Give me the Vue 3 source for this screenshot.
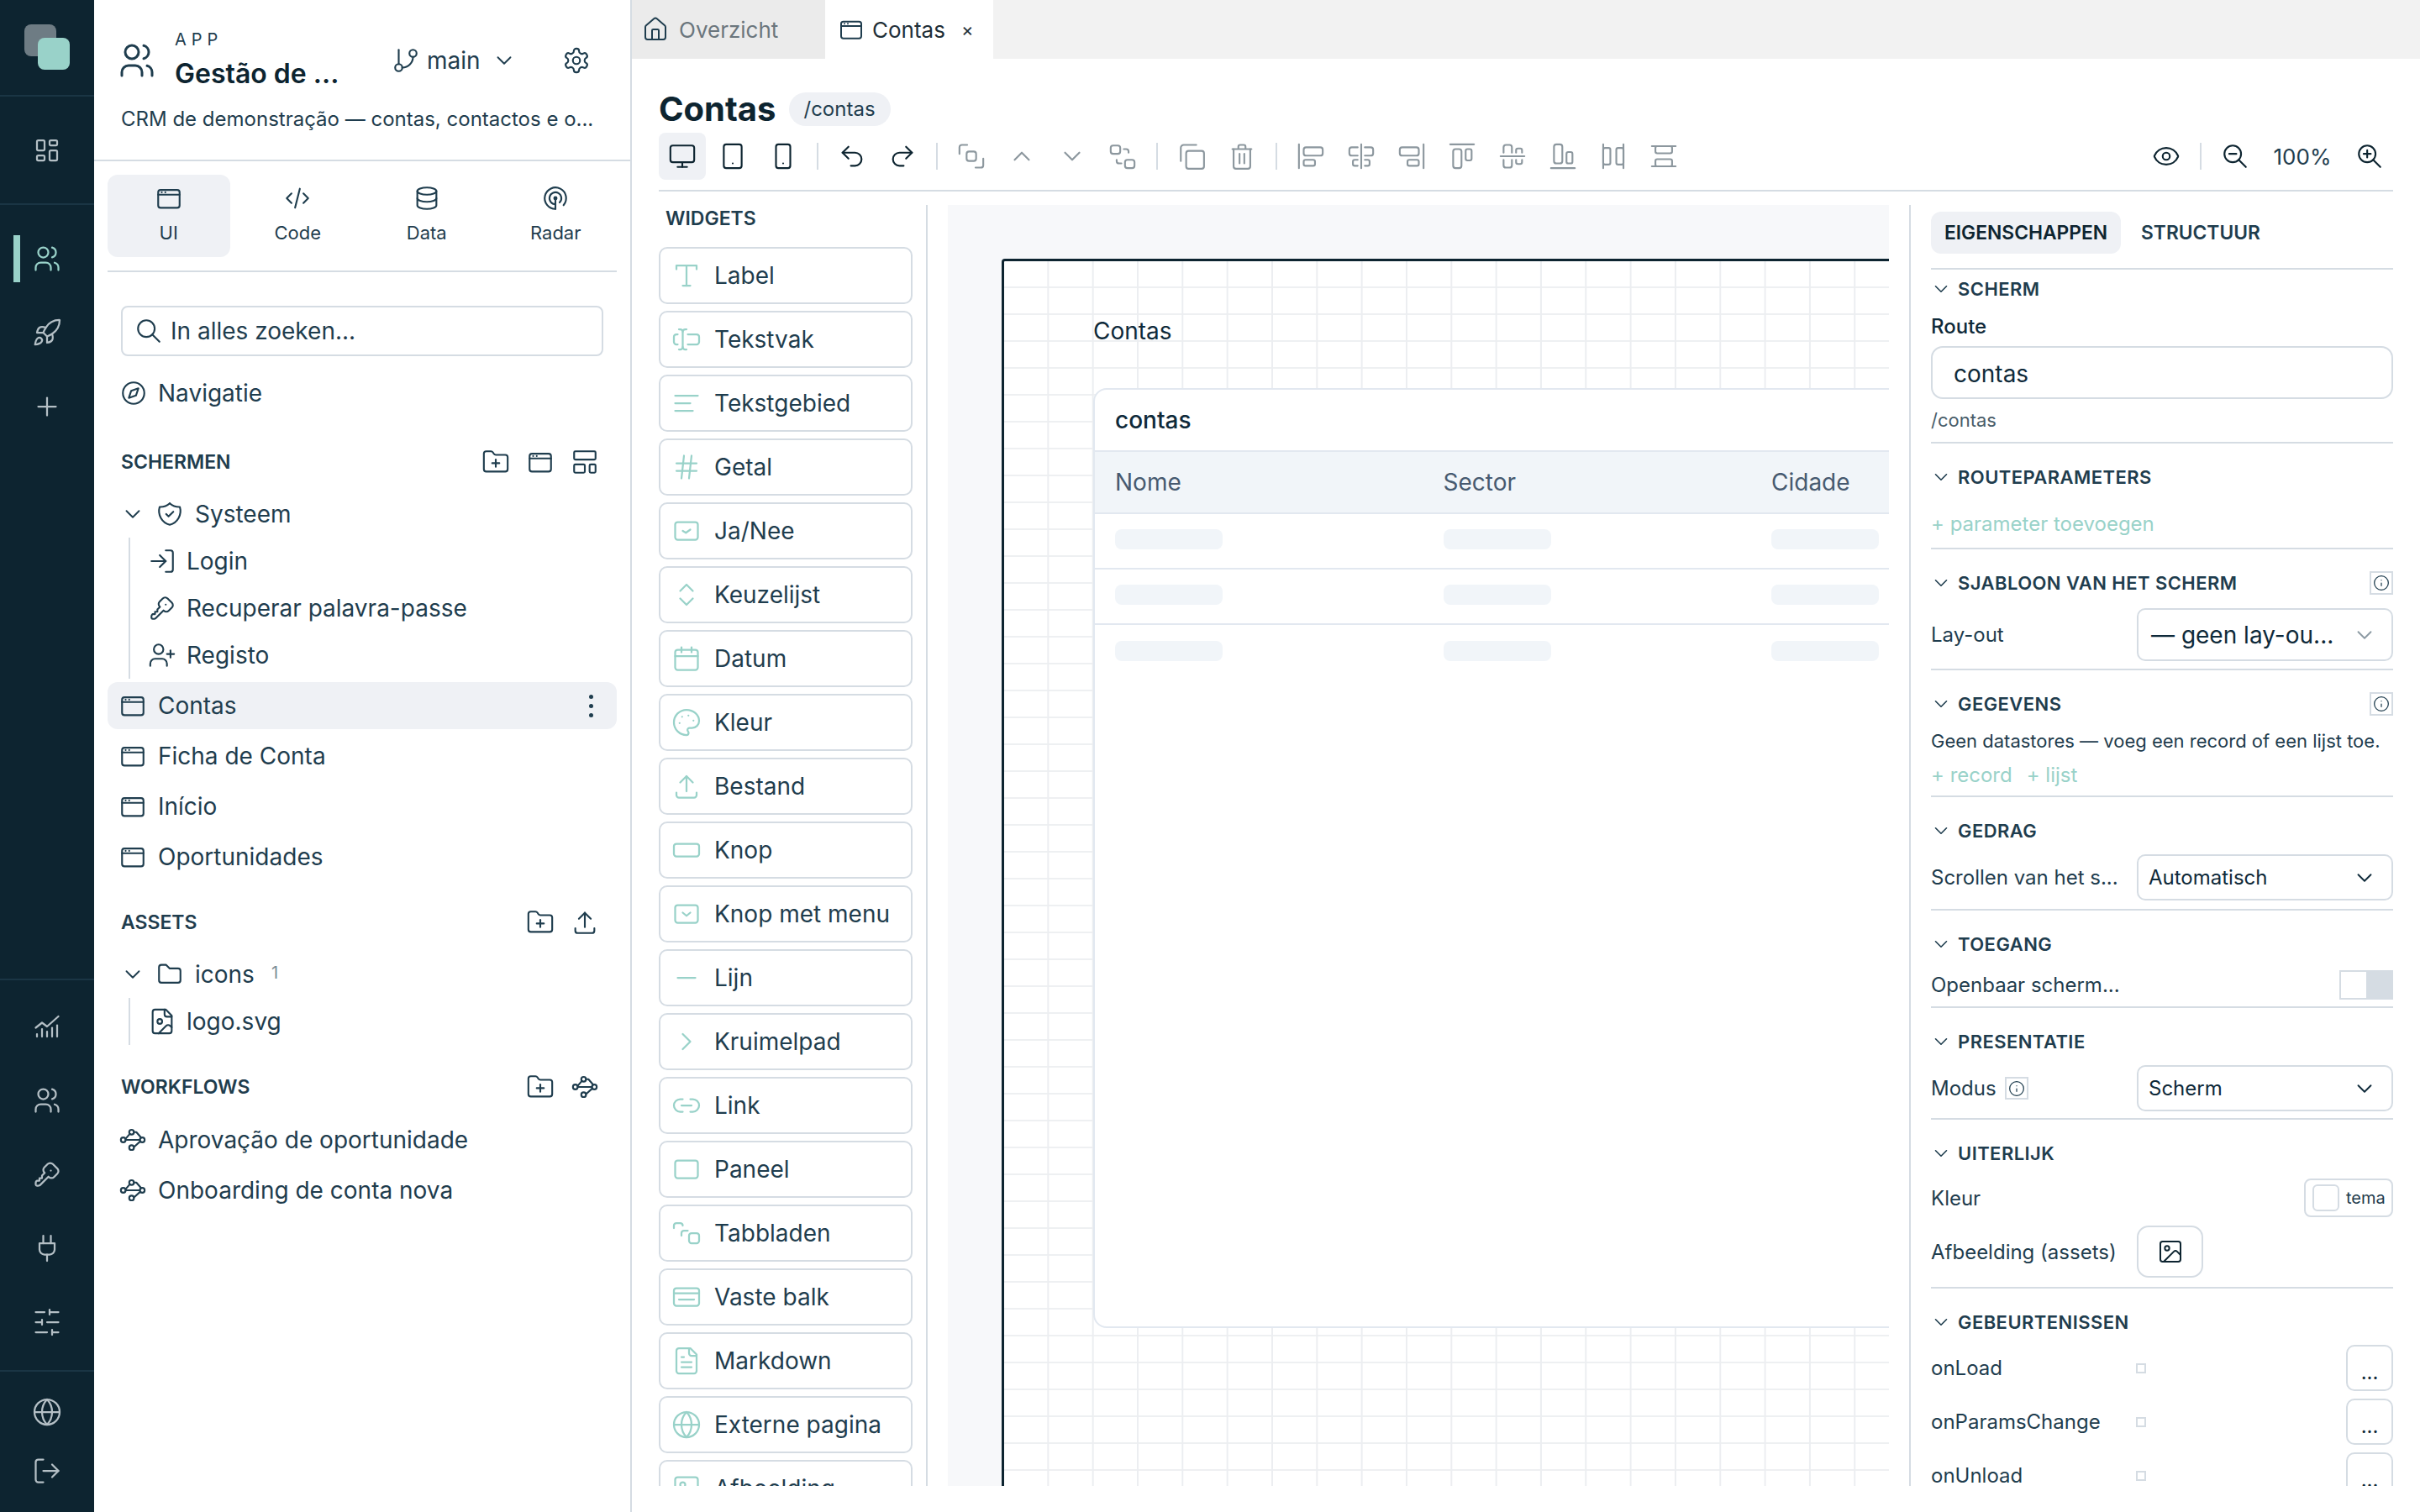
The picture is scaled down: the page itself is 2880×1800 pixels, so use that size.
<script setup>
const p = (...ds) => ds.map((d) => `<path d="${d}"/>`).join('')
const r = (x, y, w, h, rx = 2) => `<rect x="${x}" y="${y}" width="${w}" height="${h}" rx="${rx}"/>`
const c = (x, y, rad) => `<circle cx="${x}" cy="${y}" r="${rad}"/>`
const I = {
  dash: p('M5 4h4a1 1 0 0 1 1 1v6a1 1 0 0 1-1 1h-4a1 1 0 0 1-1-1v-6a1 1 0 0 1 1-1', 'M5 16h4a1 1 0 0 1 1 1v2a1 1 0 0 1-1 1h-4a1 1 0 0 1-1-1v-2a1 1 0 0 1 1-1', 'M15 12h4a1 1 0 0 1 1 1v6a1 1 0 0 1-1 1h-4a1 1 0 0 1-1-1v-6a1 1 0 0 1 1-1', 'M15 4h4a1 1 0 0 1 1 1v2a1 1 0 0 1-1 1h-4a1 1 0 0 1-1-1v-2a1 1 0 0 1 1-1'),
  users: c(9, 7, 4) + p('M3 21v-2a4 4 0 0 1 4-4h4a4 4 0 0 1 4 4v2', 'M16 3.13a4 4 0 0 1 0 7.75', 'M21 21v-2a4 4 0 0 0-3-3.85'),
  rocket: p('M4.5 16.5c-1.5 1.26-2 5-2 5s3.74-.5 5-2c.71-.84.7-2.13-.09-2.91a2.18 2.18 0 0 0-2.91-.09z', 'm12 15-3-3a22 22 0 0 1 2-3.95A12.88 12.88 0 0 1 22 2c0 2.72-.78 7.5-6 11a22.35 22.35 0 0 1-4 2z', 'M9 12H4s.55-3.03 2-4c1.62-1.08 5 0 5 0', 'M12 15v5s3.03-.55 4-2c1.08-1.62 0-5 0-5'),
  plus: p('M5 12h14', 'M12 5v14'),
  chart: p('M3 13l5-4 4 3 9-8', 'M4 20v-2', 'M8 20v-6', 'M12 20v-4', 'M16 20v-7', 'M20 20v-9'),
  key: p('M16.555 3.843l3.602 3.602a2.877 2.877 0 0 1 0 4.069l-2.643 2.643a2.877 2.877 0 0 1-4.069 0l-.301-.301l-6.558 6.558a2 2 0 0 1-1.239.578l-.175.008h-1.172a1 1 0 0 1-.993-.883l-.007-.117v-1.172a2 2 0 0 1 .467-1.284l.119-.13l.414-.414h2v-2h2v-2l2.144-2.144l-.301-.301a2.877 2.877 0 0 1 0-4.069l2.643-2.643a2.877 2.877 0 0 1 4.069 0z', 'M15 9h.01'),
  plug: p('M12 22v-5', 'M9 8V2', 'M15 8V2', 'M18 8v5a4 4 0 0 1-4 4h-4a4 4 0 0 1-4-4V8Z'),
  sliders: p('M21 4h-7', 'M10 4H3', 'M21 12h-9', 'M8 12H3', 'M21 20h-5', 'M12 20H3', 'M14 2v4', 'M8 10v4', 'M16 18v4'),
  globe: c(12, 12, 10) + p('M12 2a14.5 14.5 0 0 0 0 20 14.5 14.5 0 0 0 0-20', 'M2 12h20'),
  logout: p('M9 21H5a2 2 0 0 1-2-2V5a2 2 0 0 1 2-2h4', 'm16 17 5-5-5-5', 'M21 12H9'),
  login: p('M15 3h4a2 2 0 0 1 2 2v14a2 2 0 0 1-2 2h-4', 'm10 17 5-5-5-5', 'M15 12H3'),
  branch: p('M6 3v12') + c(18, 6, 3) + c(6, 18, 3) + p('M18 9a9 9 0 0 1-9 9'),
  gear: p('M12.22 2h-.44a2 2 0 0 0-2 2v.18a2 2 0 0 1-1 1.73l-.43.25a2 2 0 0 1-2 0l-.15-.08a2 2 0 0 0-2.73.73l-.22.38a2 2 0 0 0 .73 2.73l.15.1a2 2 0 0 1 1 1.72v.51a2 2 0 0 1-1 1.74l-.15.09a2 2 0 0 0-.73 2.73l.22.38a2 2 0 0 0 2.73.73l.15-.08a2 2 0 0 1 2 0l.43.25a2 2 0 0 1 1 1.73V20a2 2 0 0 0 2 2h.44a2 2 0 0 0 2-2v-.18a2 2 0 0 1 1-1.73l.43-.25a2 2 0 0 1 2 0l.15.08a2 2 0 0 0 2.73-.73l.22-.39a2 2 0 0 0-.73-2.73l-.15-.08a2 2 0 0 1-1-1.74v-.5a2 2 0 0 1 1-1.74l.15-.09a2 2 0 0 0 .73-2.73l-.22-.38a2 2 0 0 0-2.73-.73l-.15.08a2 2 0 0 1-2 0l-.43-.25a2 2 0 0 1-1-1.73V4a2 2 0 0 0-2-2z') + c(12, 12, 3),
  win: r(3, 5, 18, 15) + p('M3 9h18', 'M6 7h.01', 'M9 7h.01'),
  code: p('M7 8l-4 4l4 4', 'M17 8l4 4l-4 4', 'M14 4l-4 16'),
  db: p('M12 6m-8 0a8 3 0 1 0 16 0a8 3 0 1 0-16 0', 'M4 6v6a8 3 0 0 0 16 0v-6', 'M4 12v6a8 3 0 0 0 16 0v-6'),
  radar: p('M12 12m-1 0a1 1 0 1 0 2 0a1 1 0 1 0-2 0', 'M15.51 15.56a5 5 0 1 0-3.51 1.44', 'M18.832 17.86a9 9 0 1 0-6.832 3.14', 'M12 12v9'),
  search: p('M10 10m-7 0a7 7 0 1 0 14 0a7 7 0 1 0-14 0', 'M21 21l-6-6'),
  compass: p('M8 16l2-6l6-2l-2 6l-6 2') + c(12, 12, 9),
  folderPlus: p('M12 10v6', 'M9 13h6', 'M20 20a2 2 0 0 0 2-2V8a2 2 0 0 0-2-2h-7.9a2 2 0 0 1-1.69-.9L9.6 3.9A2 2 0 0 0 7.93 3H4a2 2 0 0 0-2 2v13a2 2 0 0 0 2 2Z'),
  folder: p('M5 4h4l3 3h7a2 2 0 0 1 2 2v8a2 2 0 0 1-2 2h-14a2 2 0 0 1-2-2v-11a2 2 0 0 1 2-2'),
  layout: r(3, 3, 18, 7, 1) + r(3, 14, 9, 7, 1) + r(16, 14, 5, 7, 1),
  chev: p('m6 9 6 6 6-6'),
  shield: p('M9 12l2 2l4-4', 'M12 3a12 12 0 0 0 8.5 3a12 12 0 0 1-8.5 15a12 12 0 0 1-8.5-15a12 12 0 0 0 8.5-3'),
  userPlus: p('M16 21v-2a4 4 0 0 0-4-4H6a4 4 0 0 0-4 4v2', 'M19 8v6', 'M22 11h-6') + c(9, 7, 4),
  upload: p('M4 17v2a2 2 0 0 0 2 2h12a2 2 0 0 0 2-2v-2', 'M7 9l5-5l5 5', 'M12 4v12'),
  fileImg: p('M15 2H6a2 2 0 0 0-2 2v16a2 2 0 0 0 2 2h12a2 2 0 0 0 2-2V7Z', 'M14 2v4a2 2 0 0 0 2 2h4', 'm20 17-1.296-1.296a2.41 2.41 0 0 0-3.408 0L9 22') + c(10, 12, 2),
  flow: c(11, 5.5, 2) + c(4, 12, 2) + c(20, 12, 2) + c(11, 18.5, 2) + p('M6 11l3.5-4', 'M13 5.5h2l4 4.6', 'M6 12h12', 'M13 18l5-4.5'),
  home: p('M15 21v-8a1 1 0 0 0-1-1h-4a1 1 0 0 0-1 1v8', 'M3 10a2 2 0 0 1 .709-1.528l7-5.999a2 2 0 0 1 2.582 0l7 5.999A2 2 0 0 1 21 10v9a2 2 0 0 1-2 2H5a2 2 0 0 1-2-2z'),
  monitor: r(2, 3, 20, 14) + p('M8 21h8', 'M12 17v4'),
  tablet: r(4.5, 2, 15, 20) + p('M12 18h.01'),
  phone: r(6, 2, 12, 20) + p('M12 18h.01'),
  undo: p('M9 14 4 9l5-5', 'M4 9h10.5a5.5 5.5 0 0 1 5.5 5.5a5.5 5.5 0 0 1-5.5 5.5H11'),
  redo: p('m15 14 5-5-5-5', 'M20 9H9.5A5.5 5.5 0 0 0 4 14.5A5.5 5.5 0 0 0 9.5 20H13'),
  group: p('M2 10V4.5a2 2 0 0 1 2-2h4.5', 'M22 14v5.5a2 2 0 0 1-2 2h-4.5') + r(8, 8, 8, 8),
  ungroup: r(2, 3, 8, 7) + r(14, 15, 8, 7) + p('M13 6h2a2 2 0 0 1 2 2v1', 'M11 18H9a2 2 0 0 1-2-2v-1'),
  up: p('m18 15-6-6-6 6'),
  copy: r(7.5, 7.5, 15, 15) + p('M3 16V5a2.5 2.5 0 0 1 2.5-2.5H16'),
  trash: p('M4 6h16', 'M5 6v14.5a2 2 0 0 0 2 2h10a2 2 0 0 0 2-2V6', 'M9 5.5V4a1.5 1.5 0 0 1 1.5-1.5h3A1.5 1.5 0 0 1 15 4v1.5', 'M10 10v8', 'M14 10v8'),
  aL: p('M2 2v20') + r(6, 4.5, 16, 7) + r(6, 15, 9.5, 5, 1.5),
  aC: p('M12 2v20', 'M9 4.5H4a2 2 0 0 0-2 2v3a2 2 0 0 0 2 2h5', 'M15 4.5h5a2 2 0 0 1 2 2v3a2 2 0 0 1-2 2h-5', 'M9 15H6.5A1.5 1.5 0 0 0 5 16.5v2A1.5 1.5 0 0 0 6.5 20H9', 'M15 15h2.5a1.5 1.5 0 0 1 1.5 1.5v2a1.5 1.5 0 0 1-1.5 1.5H15'),
  aR: p('M22 2v20') + r(2, 4.5, 16, 7) + r(8.5, 15, 9.5, 5, 1.5),
  aT: p('M2 2h20') + r(4.5, 6, 7, 16) + r(15, 6, 5, 9.5, 1.5),
  aM: p('M2 12h20', 'M4.5 9V4.5a2 2 0 0 1 2-2h3a2 2 0 0 1 2 2V9', 'M4.5 15v4.5a2 2 0 0 0 2 2h3a2 2 0 0 0 2-2V15', 'M15 9V7a1.5 1.5 0 0 1 1.5-1.5h2A1.5 1.5 0 0 1 20 7v2', 'M15 15v2a1.5 1.5 0 0 0 1.5 1.5h2a1.5 1.5 0 0 0 1.5-1.5v-2'),
  aB: p('M2 22h20') + r(4.5, 2, 7, 16) + r(15, 8.5, 5, 9.5, 1.5),
  dH: p('M3.5 2v20', 'M20.5 2v20') + r(3.5, 5, 6, 14, 1.5) + r(14.5, 5, 6, 14, 1.5),
  dV: p('M2 3.5h20', 'M2 20.5h20') + r(5, 3.5, 14, 6, 1.5) + r(5, 14.5, 14, 6, 1.5),
  eye: p('M2.062 12.348a1 1 0 0 1 0-.696 10.75 10.75 0 0 1 19.876 0 1 1 0 0 1 0 .696 10.75 10.75 0 0 1-19.876 0') + c(12, 12, 3),
  zoomOut: c(10, 10, 7) + p('M7 10h6', 'M21 21l-6-6'),
  zoomIn: c(10, 10, 7) + p('M7 10h6', 'M10 7v6', 'M21 21l-6-6'),
  info: c(12, 12, 10) + p('M12 16v-4', 'M12 8h.01'),
  type: p('M12 4v16', 'M4 7V4h16v3', 'M9 20h6'),
  textInput: p('M12 20h-1a2 2 0 0 1-2-2 2 2 0 0 1-2 2H6', 'M13 8h7a2 2 0 0 1 2 2v4a2 2 0 0 1-2 2h-7', 'M5 16H4a2 2 0 0 1-2-2v-4a2 2 0 0 1 2-2h1', 'M6 4h1a2 2 0 0 1 2 2 2 2 0 0 1 2-2h1', 'M9 6v12'),
  lines: p('M21 6H3', 'M15 12H3', 'M17 18H3'),
  hash: p('M4 9h16', 'M4 15h16', 'M10 3 8 21', 'M16 3l-2 18'),
  check: r(3, 5, 18, 14) + p('m9 12 2.5 1.5L15 11'),
  updown: p('m7 15 5 5 5-5', 'm7 9 5-5 5 5'),
  cal: r(3, 5, 18, 16) + p('M16 3v4', 'M8 3v4', 'M3 10h18'),
  palette: p('M12 2C6.5 2 2 6.5 2 12s4.5 10 10 10c.926 0 1.648-.746 1.648-1.688 0-.437-.18-.835-.437-1.125-.29-.289-.438-.652-.438-1.125a1.64 1.64 0 0 1 1.668-1.668h1.996c3.051 0 5.555-2.503 5.555-5.554C21.965 6.012 17.461 2 12 2z', 'M13.5 6.5h.01', 'M17.5 10.5h.01', 'M8.5 7.5h.01', 'M6.5 12.5h.01'),
  btn: r(2, 7, 20, 10),
  btnMenu: r(3, 5, 18, 14) + p('m9 11 3 2.5 3-2.5'),
  line: p('M5 12h14'),
  crumb: p('m9 18 6-6-6-6'),
  link: p('M9 17H7A5 5 0 0 1 7 7h2', 'M15 7h2a5 5 0 1 1 0 10h-2', 'M8 12h8'),
  panel: r(3, 5, 18, 14),
  tabs: p('M2 8V6a2 2 0 0 1 2-2h3a2 2 0 0 1 2 2', 'M8 14v-2a2 2 0 0 1 2-2h3') + r(14, 12, 8, 8),
  bar: r(2, 5, 20, 14) + p('M2 9h20', 'M6 14h12'),
  file: p('M15 2H6a2 2 0 0 0-2 2v16a2 2 0 0 0 2 2h12a2 2 0 0 0 2-2V7Z', 'M14 2v4a2 2 0 0 0 2 2h4', 'M10 9H8', 'M16 13H8', 'M16 17H8'),
  image: r(3, 3, 18, 18) + c(9, 9, 2) + p('m21 15-3.086-3.086a2 2 0 0 0-2.828 0L6 21'),
}

const railTop = ['users', 'rocket', 'plus']
const railBottom = ['chart', 'users', 'key', 'plug', 'sliders']
const sideTabs = [
  { n: 'win', t: 'UI', on: true },
  { n: 'code', t: 'Code' },
  { n: 'db', t: 'Data' },
  { n: 'radar', t: 'Radar' },
]
const sysScreens = [
  { n: 'login', t: 'Login' },
  { n: 'key', t: 'Recuperar palavra-passe' },
  { n: 'userPlus', t: 'Registo' },
]
const screens = ['Ficha de Conta', 'Início', 'Oportunidades']
const flows = ['Aprovação de oportunidade', 'Onboarding de conta nova']
const tool = [
  [{ n: 'monitor', on: true }, { n: 'tablet' }, { n: 'phone' }],
  [{ n: 'undo' }, { n: 'redo' }],
  [{ n: 'group', off: true }, { n: 'up', off: true }, { n: 'chev', off: true }, { n: 'ungroup', off: true }],
  [{ n: 'copy', off: true }, { n: 'trash', off: true }],
  ['aL', 'aC', 'aR', 'aT', 'aM', 'aB', 'dH', 'dV'].map((n) => ({ n, off: true })),
]
const widgets = [
  ['type', 'Label'], ['textInput', 'Tekstvak'], ['lines', 'Tekstgebied'], ['hash', 'Getal'], ['check', 'Ja/Nee'],
  ['updown', 'Keuzelijst'], ['cal', 'Datum'], ['palette', 'Kleur'], ['upload', 'Bestand'], ['btn', 'Knop'],
  ['btnMenu', 'Knop met menu'], ['line', 'Lijn'], ['crumb', 'Kruimelpad'], ['link', 'Link'], ['panel', 'Paneel'],
  ['tabs', 'Tabbladen'], ['bar', 'Vaste balk'], ['file', 'Markdown'], ['globe', 'Externe pagina'], ['image', 'Afbeelding'],
]
const columns = ['Nome', 'Sector', 'Cidade']
const events = ['onLoad', 'onParamsChange', 'onUnload']
</script>

<template>
  <div class="app">
    <aside class="rail">
      <div class="rail-logo"><span class="logo-a"></span><span class="logo-b"></span></div>
      <div class="rail-sec rail-dash"><svg class="ic i36" viewBox="0 0 24 24" v-html="I.dash"></svg></div>
      <div class="rail-sec rail-grow">
        <div v-for="(n, i) in railTop" :key="n" class="rail-item" :class="{ on: i === 0 }">
          <svg class="ic i36" viewBox="0 0 24 24" v-html="I[n]"></svg>
        </div>
      </div>
      <div class="rail-sec rail-low">
        <div v-for="n in railBottom" :key="n" class="rail-item">
          <svg class="ic i36" viewBox="0 0 24 24" v-html="I[n]"></svg>
        </div>
      </div>
      <div class="rail-end">
        <div class="rail-item"><svg class="ic i36" viewBox="0 0 24 24" v-html="I.globe"></svg></div>
        <div class="rail-item"><svg class="ic i36" viewBox="0 0 24 24" v-html="I.logout"></svg></div>
      </div>
    </aside>

    <nav class="side">
      <header class="s-head">
        <div class="s-top">
          <svg class="ic i48 s-users" viewBox="0 0 24 24" v-html="I.users"></svg>
          <div class="s-name">
            <div class="s-app">APP</div>
            <div class="s-title">Gestão de ...</div>
          </div>
          <div class="s-branch">
            <svg class="ic i34" viewBox="0 0 24 24" v-html="I.branch"></svg>
            <span>main</span>
            <svg class="ic i30 s-chev" viewBox="0 0 24 24" v-html="I.chev"></svg>
          </div>
          <svg class="ic i34 s-gear" viewBox="0 0 24 24" v-html="I.gear"></svg>
        </div>
        <div class="s-sub">CRM de demonstração — contas, contactos e o...</div>
      </header>

      <div class="s-tabs">
        <div v-for="t in sideTabs" :key="t.t" class="s-tab" :class="{ on: t.on }">
          <svg class="ic i34" viewBox="0 0 24 24" v-html="I[t.n]"></svg>
          <span>{{ t.t }}</span>
        </div>
      </div>

      <div class="search">
        <svg class="ic i34" viewBox="0 0 24 24" v-html="I.search"></svg>
        <span>In alles zoeken...</span>
      </div>

      <div class="row row-nav">
        <svg class="ic i34" viewBox="0 0 24 24" v-html="I.compass"></svg>
        <span>Navigatie</span>
      </div>

      <div class="s-label l-screens">
        <span>SCHERMEN</span>
        <div class="s-actions">
          <svg class="ic i34" viewBox="0 0 24 24" v-html="I.folderPlus"></svg>
          <svg class="ic i34" viewBox="0 0 24 24" v-html="I.win"></svg>
          <svg class="ic i34" viewBox="0 0 24 24" v-html="I.layout"></svg>
        </div>
      </div>

      <div class="row row-folder r-sys">
        <svg class="ic i30 f-chev" viewBox="0 0 24 24" v-html="I.chev"></svg>
        <svg class="ic i34" viewBox="0 0 24 24" v-html="I.shield"></svg>
        <span>Systeem</span>
      </div>
      <div class="nest">
        <div v-for="s in sysScreens" :key="s.t" class="nest-row">
          <svg class="ic i34" viewBox="0 0 24 24" v-html="I[s.n]"></svg>
          <span>{{ s.t }}</span>
        </div>
      </div>

      <div class="row row-item sel">
        <svg class="ic i34" viewBox="0 0 24 24" v-html="I.win"></svg>
        <span class="grow">Contas</span>
        <span class="kebab"><i></i><i></i><i></i></span>
      </div>
      <div v-for="s in screens" :key="s" class="row row-item">
        <svg class="ic i34" viewBox="0 0 24 24" v-html="I.win"></svg>
        <span>{{ s }}</span>
      </div>

      <div class="s-label l-next">
        <span>ASSETS</span>
        <div class="s-actions">
          <svg class="ic i34" viewBox="0 0 24 24" v-html="I.folderPlus"></svg>
          <svg class="ic i34" viewBox="0 0 24 24" v-html="I.upload"></svg>
        </div>
      </div>
      <div class="row row-folder r-icons">
        <svg class="ic i30 f-chev" viewBox="0 0 24 24" v-html="I.chev"></svg>
        <svg class="ic i34" viewBox="0 0 24 24" v-html="I.folder"></svg>
        <span>icons</span>
        <small>1</small>
      </div>
      <div class="nest">
        <div class="nest-row">
          <svg class="ic i34" viewBox="0 0 24 24" v-html="I.fileImg"></svg>
          <span>logo.svg</span>
        </div>
      </div>

      <div class="s-label l-next">
        <span>WORKFLOWS</span>
        <div class="s-actions">
          <svg class="ic i34" viewBox="0 0 24 24" v-html="I.folderPlus"></svg>
          <svg class="ic i34" viewBox="0 0 24 24" v-html="I.flow"></svg>
        </div>
      </div>
      <div class="flows">
        <div v-for="f in flows" :key="f" class="row row-item">
          <svg class="ic i34" viewBox="0 0 24 24" v-html="I.flow"></svg>
          <span>{{ f }}</span>
        </div>
      </div>
    </nav>

    <main class="main">
      <div class="tabbar">
        <div class="tab t-over">
          <svg class="ic i32" viewBox="0 0 24 24" v-html="I.home"></svg>
          <span>Overzicht</span>
        </div>
        <div class="tab t-cur">
          <svg class="ic i32" viewBox="0 0 24 24" v-html="I.win"></svg>
          <span>Contas</span>
          <em>×</em>
        </div>
      </div>

      <div class="work">
        <div class="title-row">
          <h1>Contas</h1>
          <span class="badge">/contas</span>
        </div>

        <div class="toolbar">
          <template v-for="(g, gi) in tool" :key="gi">
            <span v-if="gi" class="tsep"></span>
            <span v-for="b in g" :key="b.n" class="tbtn" :class="{ on: b.on, off: b.off }">
              <svg class="ic i34" viewBox="0 0 24 24" v-html="I[b.n]"></svg>
            </span>
          </template>
          <span class="tspace"></span>
          <span class="tbtn"><svg class="ic i34" viewBox="0 0 24 24" v-html="I.eye"></svg></span>
          <span class="tsep"></span>
          <span class="tbtn"><svg class="ic i34" viewBox="0 0 24 24" v-html="I.zoomOut"></svg></span>
          <span class="zoomv">100%</span>
          <span class="tbtn"><svg class="ic i34" viewBox="0 0 24 24" v-html="I.zoomIn"></svg></span>
        </div>

        <div class="panes">
          <section class="widgets">
            <div class="w-head">WIDGETS</div>
            <div v-for="w in widgets" :key="w[1]" class="w-item">
              <svg class="ic i36" viewBox="0 0 24 24" v-html="I[w[0]]"></svg>
              <span>{{ w[1] }}</span>
            </div>
          </section>

          <section class="canvas">
            <div class="frame">
              <div class="c-label">Contas</div>
              <div class="card">
                <div class="card-title">contas</div>
                <div class="grid3 head">
                  <span v-for="col in columns" :key="col">{{ col }}</span>
                </div>
                <div v-for="n in 3" :key="n" class="grid3 body">
                  <span v-for="col in columns" :key="col" class="bone"></span>
                </div>
              </div>
            </div>
          </section>

          <section class="props">
            <div class="p-tabs">
              <span class="p-tab on">EIGENSCHAPPEN</span>
              <span class="p-tab">STRUCTUUR</span>
            </div>

            <div class="sec s-scherm">
              <div class="sh sh-first"><svg class="ic i26" viewBox="0 0 24 24" v-html="I.chev"></svg><span>SCHERM</span></div>
              <div class="f-label">Route</div>
              <div class="input">contas</div>
              <div class="hint">/contas</div>
            </div>

            <div class="sec s-route">
              <div class="sh"><svg class="ic i26" viewBox="0 0 24 24" v-html="I.chev"></svg><span>ROUTEPARAMETERS</span></div>
              <div class="add add-param">+ parameter toevoegen</div>
            </div>

            <div class="sec s-tmpl">
              <div class="sh">
                <svg class="ic i26" viewBox="0 0 24 24" v-html="I.chev"></svg><span>SJABLOON VAN HET SCHERM</span>
                <b class="infob"><svg class="ic i22" viewBox="0 0 24 24" v-html="I.info"></svg></b>
              </div>
              <div class="frow fr-layout">
                <span>Lay-out</span>
                <div class="sel-box big">— geen lay-ou...<svg class="ic i30 gray" viewBox="0 0 24 24" v-html="I.chev"></svg></div>
              </div>
            </div>

            <div class="sec s-data">
              <div class="sh">
                <svg class="ic i26" viewBox="0 0 24 24" v-html="I.chev"></svg><span>GEGEVENS</span>
                <b class="infob"><svg class="ic i22" viewBox="0 0 24 24" v-html="I.info"></svg></b>
              </div>
              <div class="note">Geen datastores — voeg een record of een lijst toe.</div>
              <div class="adds"><span class="add">+ record</span><span class="add">+ lijst</span></div>
            </div>

            <div class="sec s-behave">
              <div class="sh"><svg class="ic i26" viewBox="0 0 24 24" v-html="I.chev"></svg><span>GEDRAG</span></div>
              <div class="frow fr-sel">
                <span>Scrollen van het s...</span>
                <div class="sel-box">Automatisch<svg class="ic i30" viewBox="0 0 24 24" v-html="I.chev"></svg></div>
              </div>
            </div>

            <div class="sec">
              <div class="sh"><svg class="ic i26" viewBox="0 0 24 24" v-html="I.chev"></svg><span>TOEGANG</span></div>
              <div class="frow fr-toggle">
                <span>Openbaar scherm...</span>
                <div class="toggle"><i></i><b></b></div>
              </div>
            </div>

            <div class="sec">
              <div class="sh"><svg class="ic i26" viewBox="0 0 24 24" v-html="I.chev"></svg><span>PRESENTATIE</span></div>
              <div class="frow fr-sel">
                <span class="lab-i">Modus<b class="infob small"><svg class="ic i22" viewBox="0 0 24 24" v-html="I.info"></svg></b></span>
                <div class="sel-box">Scherm<svg class="ic i30" viewBox="0 0 24 24" v-html="I.chev"></svg></div>
              </div>
            </div>

            <div class="sec s-look">
              <div class="sh"><svg class="ic i26" viewBox="0 0 24 24" v-html="I.chev"></svg><span>UITERLIJK</span></div>
              <div class="frow fr-color">
                <span>Kleur</span>
                <div class="colorb"><i></i><span>tema</span></div>
              </div>
              <div class="frow fr-img">
                <span>Afbeelding (assets)</span>
                <div class="imgb"><svg class="ic i32 dark" viewBox="0 0 24 24" v-html="I.image"></svg></div>
              </div>
            </div>

            <div class="sec s-events">
              <div class="sh"><svg class="ic i26" viewBox="0 0 24 24" v-html="I.chev"></svg><span>GEBEURTENISSEN</span></div>
              <div v-for="e in events" :key="e" class="evt">
                <span class="evt-n">{{ e }}</span>
                <i class="tick"></i>
                <span class="dots">...</span>
              </div>
            </div>
          </section>
        </div>
      </div>
    </main>
  </div>
</template>

<style>
html, body { margin: 0; background: #fff; }
</style>

<style scoped>
* { box-sizing: border-box; }
.app {
  width: 2880px; height: 1800px; overflow: hidden; display: flex;
  font-family: Inter, "Noto Sans", sans-serif; font-size: 28px; color: #1f3d4e; background: #fff;
}
.ic { flex: none; display: block; fill: none; stroke: currentColor; stroke-width: 1.5; stroke-linecap: round; stroke-linejoin: round; }
.i22 { width: 22px; height: 22px; }
.i26 { width: 26px; height: 26px; }
.i30 { width: 30px; height: 30px; }
.i32 { width: 32px; height: 32px; }
.i34 { width: 34px; height: 34px; }
.i36 { width: 36px; height: 36px; }
.i48 { width: 48px; height: 48px; }

/* rail */
.rail { width: 112px; flex: none; height: 100%; background: #0d2430; color: #b4bfc5; display: flex; flex-direction: column; }
.rail-logo { height: 113px; flex: none; position: relative; }
.logo-a, .logo-b { position: absolute; width: 38px; height: 38px; border-radius: 8px; }
.logo-a { left: 29px; top: 29px; background: #6e7c84; }
.logo-b { left: 45px; top: 45px; background: #99d2c9; }
.rail-sec { border-top: 2px solid #1a3544; }
.rail-dash { height: 129px; flex: none; display: flex; align-items: center; justify-content: center; }
.rail-grow { flex: 1; padding-top: 36px; display: flex; flex-direction: column; gap: 32px; }
.rail-low { height: 466px; flex: none; padding-top: 27px; display: flex; flex-direction: column; gap: 32px; }
.rail-end { border-top: 2px solid #1a3544; height: 169px; flex: none; padding-top: 20px; display: flex; flex-direction: column; gap: 14px; }
.rail-item { height: 56px; flex: none; display: flex; align-items: center; justify-content: center; position: relative; }
.rail-item.on { color: #99d2c9; }
.rail-item.on::before { content: ""; position: absolute; left: 16px; top: 0; width: 8px; height: 56px; background: #99d2c9; }

/* sidebar */
.side { width: 640px; flex: none; height: 100%; border-right: 2px solid #d5dce3; overflow: hidden; }
.s-head { height: 192px; padding: 36px 32px 0; border-bottom: 2px solid #d5dce3; }
.s-top { height: 72px; display: flex; align-items: center; }
.s-users { margin-left: -5px; }
.s-name { margin-left: 21px; width: 212px; color: #0d2430; }
.s-app { font-size: 20px; line-height: 22px; letter-spacing: 0.3em; color: #1f3d4e; }
.s-title { font-size: 32px; line-height: 40px; font-weight: 600; margin-top: 10px; white-space: nowrap; }
.s-branch { display: flex; align-items: center; margin-left: 46px; }
.s-branch span { margin-left: 8px; font-size: 28px; }
.s-chev { margin-left: 13px; }
.s-gear { margin-left: 54px; }
.s-sub { margin-top: 17px; font-size: 24px; line-height: 34px; white-space: nowrap; }
.s-tabs { margin: 0 16px; padding: 16px 0; display: grid; grid-template-columns: repeat(4, 1fr); gap: 8px; border-bottom: 2px solid #d5dce3; }
.s-tab { height: 98px; border-radius: 12px; display: flex; flex-direction: column; align-items: center; padding-top: 11px; font-size: 22px; }
.s-tab span { margin-top: 10px; line-height: 28px; }
.s-tab.on { background: #eff1f5; }
.search { margin: 40px 32px 0; height: 60px; border: 2px solid #d5dce3; border-radius: 8px; display: flex; align-items: center; padding-left: 14px; gap: 9px; }
.row { display: flex; align-items: center; height: 56px; white-space: nowrap; }
.row-nav { margin-top: 16px; padding-left: 32px; gap: 12px; }
.row-nav .ic { margin-left: -2px; }
.s-label { height: 40px; padding: 0 37px 0 32px; display: flex; align-items: center; justify-content: space-between; font-size: 23px; font-weight: 600; }
.s-actions { display: flex; gap: 19px; }
.l-screens { margin-top: 34px; }
.l-next { margin-top: 30px; }
.row-folder { padding-left: 31px; }
.r-sys { margin-top: 14px; }
.r-icons { margin-top: 14px; }
.f-chev { margin-right: 12px; }
.row-folder span { margin-left: 13px; }
.row-folder small { margin-left: 20px; margin-top: -4px; font-size: 20px; color: #7c8c96; }
.nest { margin-left: 41px; border-left: 2px solid #d5dce3; }
.nest-row { height: 56px; display: flex; align-items: center; padding-left: 21px; gap: 12px; white-space: nowrap; }
.row-item { margin: 4px 16px 0; padding-left: 13px; gap: 13px; border-radius: 12px; }
.sel { background: #eff1f5; }
.grow { flex: 1; }
.kebab { display: flex; flex-direction: column; gap: 6px; margin-right: 28px; }
.kebab i { width: 5px; height: 5px; border-radius: 50%; background: #1f3d4e; }
.flows { margin-top: 15px; }

/* main */
.main { flex: 1; min-width: 0; height: 100%; display: flex; flex-direction: column; }
.tabbar { height: 70px; flex: none; background: #f2f2f2; display: flex; }
.tab { height: 70px; display: flex; align-items: center; font-size: 26px; white-space: nowrap; }
.t-over { width: 230px; background: #ebebeb; padding-left: 12px; gap: 12px; color: #6b767d; }
.t-over .ic { color: #1f3d4e; }
.t-cur { width: 200px; background: #fff; padding-left: 15px; gap: 9px; color: #1f2f38; }
.t-cur .ic { color: #1f3d4e; }
.t-cur em { font-style: normal; font-size: 22px; margin-left: 10px; }
.work { flex: 1; min-height: 0; padding: 0 32px 31px; display: flex; flex-direction: column; }
.title-row { margin-top: 40px; height: 40px; flex: none; display: flex; align-items: center; }
h1 { margin: 0; font-size: 40px; line-height: 40px; font-weight: 700; color: #0d2430; }
.badge { margin-left: 15px; height: 40px; padding: 0 18px; border-radius: 20px; background: #eff1f5; font-size: 24px; line-height: 40px; }
.toolbar { margin-top: 8px; padding-bottom: 12px; flex: none; border-bottom: 2px solid #d5dce3; display: flex; align-items: center; gap: 4px; box-sizing: content-box; height: 56px; }
.tbtn { width: 56px; height: 56px; flex: none; display: flex; align-items: center; justify-content: center; border-radius: 8px; color: #0d2430; }
.tbtn.on { background: #eff1f5; }
.tbtn.off { color: #8c979e; }
.tsep { width: 2px; height: 32px; background: #d5dce3; margin: 0 8px; flex: none; }
.tspace { flex: 1; }
.zoomv { width: 96px; text-align: center; font-size: 26px; }

.panes { flex: 1; min-height: 0; margin-top: 16px; display: flex; overflow: hidden; }
.widgets { width: 320px; flex: none; border-right: 2px solid #d5dce3; padding-right: 16px; overflow: hidden; }
.w-head { height: 32px; line-height: 32px; padding-left: 8px; font-size: 23px; font-weight: 600; margin-bottom: 18px; }
.w-item { height: 68px; margin-bottom: 8px; border: 2px solid #d5dce3; border-radius: 10px; display: flex; align-items: center; padding-left: 13px; gap: 15px; color: #1f3d4e; white-space: nowrap; }
.w-item .ic { color: #99d2c9; }

.canvas { width: 1120px; margin-left: 24px; flex: none; background: #f7f8fa; overflow: hidden; padding: 64px 0 0 64px; }
.frame {
  position: relative; width: 2000px; height: 2000px; background-color: #fff;
  border-left: 3px solid #0d2430; border-top: 3px solid #0d2430; border-top-left-radius: 4px;
  background-image:
    linear-gradient(to right, transparent calc(100% - 2px), #eceef1 0),
    linear-gradient(to bottom, transparent calc(100% - 2px), #eef0f2 0);
  background-size: 53.33px 32px;
}
.c-label { position: absolute; left: 106px; top: 66px; line-height: 34px; color: #0f2a3a; }
.card { position: absolute; left: 106px; top: 151px; width: 1700px; height: 1119px; background: #fff; border: 2px solid #e2e8f0; border-radius: 16px; overflow: hidden; color: #0f2a3a; }
.card-title { height: 74px; padding-left: 24px; display: flex; align-items: center; font-weight: 500; border-bottom: 2px solid #e2e8f0; }
.grid3 { display: grid; grid-template-columns: repeat(3, 390.5px) 1fr; padding-left: 24px; align-items: center; }
.head { height: 74px; background: #f1f5f9; border-bottom: 2px solid #e2e8f0; color: #475a70; }
.body { height: 66px; border-bottom: 2px solid #e2e8f0; padding-bottom: 4px; }
.body:last-child { border-bottom: 0; }
.bone { width: 128px; height: 24px; border-radius: 8px; background: #f1f5f9; }

/* props */
.props { width: 576px; flex: none; margin-left: 24px; border-left: 2px solid #d5dce3; padding-left: 24px; overflow: hidden; }
.p-tabs { padding: 8px 0 17px; display: flex; border-bottom: 2px solid #d5dce3; gap: 8px; }
.p-tab { height: 50px; padding: 0 16px 2px; display: flex; align-items: center; border-radius: 12px; font-size: 22.8px; font-weight: 600; }
.p-tab.on { background: #eff1f5; color: #0d2430; }
.sec { border-bottom: 2px solid #d5dce3; padding-bottom: 8px; }
.sh { height: 40px; margin-top: 20px; display: flex; align-items: center; font-size: 22px; font-weight: 600; letter-spacing: 0.02em; }
.sh-first { margin-top: 3px; }
.sh .ic { margin-left: -1px; margin-right: 7px; }
.sh span { flex: 1; }
.infob { width: 28px; height: 28px; border: 2px solid #d5dce3; display: flex; align-items: center; justify-content: center; font-weight: 400; }
.infob .ic { margin: 0; width: 20px; height: 20px; }
.f-label { margin-top: 10px; line-height: 30px; font-size: 24px; font-weight: 500; color: #0f2a3a; }
.input { margin-top: 8px; height: 63px; border: 2px solid #d5dce3; border-radius: 14px; padding-left: 25px; padding-top: 2px; display: flex; align-items: center; font-size: 28px; color: #0f2a3a; }
.hint { margin-top: 10px; line-height: 30px; font-size: 22px; color: #495d69; }
.s-scherm { padding-bottom: 11px; }
.add { color: #99d2c9; font-size: 24px; line-height: 32px; }
.add-param { margin-top: 20px; }
.s-route { padding-bottom: 12px; }
.frow { display: flex; align-items: center; justify-content: space-between; font-size: 24px; white-space: nowrap; }
.fr-layout { margin-top: 10px; }
.s-tmpl { padding-bottom: 9px; }
.sel-box { width: 305px; height: 55px; border: 2px solid #d5dce3; border-radius: 10px; display: flex; align-items: center; justify-content: space-between; padding: 0 17px 0 12px; font-size: 24px; color: #0f2a3a; }
.sel-box.big { height: 63px; font-size: 28px; padding-left: 15px; }
.gray { color: #8c9aa3; }
.note { margin-top: 9px; line-height: 30px; font-size: 22px; white-space: nowrap; }
.adds { margin-top: 10px; display: flex; gap: 17px; }
.fr-sel { margin-top: 8px; }
.fr-toggle { margin-top: 11px; }
.s-behave { padding-bottom: 10px; }
.toggle { width: 64px; height: 35px; display: flex; border: 2px solid #d5dce3; background: #fff; }
.toggle i { flex: 1; }
.toggle b { width: 30px; background: #d5dce3; }
.lab-i { display: flex; align-items: center; gap: 10px; }
.infob.small { height: 27px; }
.fr-color { margin-top: 10px; }
.colorb { width: 106px; height: 46px; border: 2px solid #d5dce3; border-radius: 8px; display: flex; align-items: center; padding-left: 8px; gap: 8px; font-size: 20px; }
.colorb i { width: 32px; height: 32px; border: 2px solid #d5dce3; border-radius: 6px; }
.fr-img { margin-top: 10px; justify-content: flex-start; }
.fr-img > span { width: 245px; }
.imgb { width: 79px; height: 62px; border: 2px solid #d5dce3; border-radius: 14px; display: flex; align-items: center; justify-content: center; }
.dark { color: #0d2430; }
.s-look { padding-bottom: 11px; }
.s-events { border-bottom: 0; padding-bottom: 0; }
.evt { height: 55px; margin-top: 9px; display: flex; align-items: center; font-size: 24px; }
.sh + .evt { margin-top: 7px; }
.evt-n { width: 244px; }
.tick { width: 12px; height: 12px; border: 2px solid #d5dce3; }
.dots { margin-left: auto; width: 56px; height: 55px; border: 2px solid #d5dce3; border-radius: 10px; display: flex; align-items: center; justify-content: center; padding-top: 10px; color: #0f2a3a; }
</style>
